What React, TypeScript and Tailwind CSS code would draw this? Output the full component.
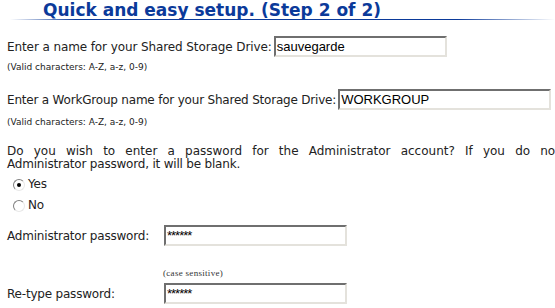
import React from "react";

const inputCls =
  "shrink-0 h-[21px] border-2 border-t-[#6f6f6f] border-l-[#6f6f6f] border-r-[#e4e2dc] border-b-[#e4e2dc] bg-white px-[1px] text-[13px] leading-[16px] tracking-normal text-black [font-family:'Liberation_Sans',Arial,sans-serif] flex items-center";

function Radio({ checked }: { checked?: boolean }) {
  return (
    <span className="relative inline-block w-[12px] h-[12px] rounded-full border border-t-[#808080] border-l-[#808080] border-r-[#e8e8e8] border-b-[#e8e8e8] bg-white">
      {checked && (
        <span className="absolute left-[3px] top-[3px] w-[4px] h-[4px] rounded-full bg-black" />
      )}
    </span>
  );
}

export default function App() {
  return (
    <div className="w-[555px] h-[308px] overflow-hidden bg-white text-[#222] [font-family:'DejaVu_Sans',Verdana,sans-serif]">
      <div className="relative h-[22px]">
        <div className="pl-[43px] pt-[1px] text-[17px] leading-[18px] font-bold text-[#0b3a9a] whitespace-nowrap">
          Quick and easy setup. (Step 2 of 2)
        </div>
        <div className="absolute left-[10px] right-0 top-[19px] h-[1px] bg-[linear-gradient(to_right,rgba(11,58,154,0)_0%,#0b3a9a_12%,#0b3a9a_82%,rgba(11,58,154,0)_100%)]" />
      </div>

      <div className="pl-[7px] pt-[14px] flex items-center whitespace-nowrap">
        <span className="shrink-0 text-[12px] leading-[14px] tracking-[-0.1px]">Enter a name for your Shared Storage Drive:</span>
        <div className={inputCls + " ml-[2px] w-[173px]"}>sauvegarde</div>
      </div>
      <div className="pl-[7px] pt-[5px] text-[9px] leading-[10px]">(Valid characters: A-Z, a-z, 0-9)</div>

      <div className="pl-[7px] pt-[17px] flex items-center whitespace-nowrap">
        <span className="shrink-0 text-[12px] leading-[14px] tracking-[-0.2px]">Enter a WorkGroup name for your Shared Storage Drive:</span>
        <div className={inputCls + " ml-[2px] w-[213px]"}>WORKGROUP</div>
      </div>
      <div className="pl-[7px] pt-[7px] text-[9px] leading-[10px]">(Valid characters: A-Z, a-z, 0-9)</div>

      <div className="pl-[7px] pt-[18px] w-[560px] text-[12px] leading-[13px]">
        <div className="whitespace-nowrap flex justify-between">
          {"Do you wish to enter a password for the Administrator account? If you do not"
            .split(" ")
            .map((w, i) => (
              <span key={i}>{w}</span>
            ))}
        </div>
        <div className="tracking-[-0.2px]">Administrator password, it will be blank.</div>
      </div>

      <div className="pl-[13px] pt-[7px] flex flex-col gap-[8px] text-[12px] leading-[13px] tracking-[-0.2px]">
        <label className="flex items-center gap-[3px]">
          <Radio checked />
          <span>Yes</span>
        </label>
        <label className="flex items-center gap-[3px]">
          <Radio />
          <span>No</span>
        </label>
      </div>

      <div className="pl-[7px] pt-[13px] flex items-center whitespace-nowrap">
        <span className="w-[157px] shrink-0 text-[12px] leading-[14px] tracking-[-0.2px]">Administrator password:</span>
        <div className={inputCls + " w-[183px] text-[10px] !tracking-[-1px]"}>******</div>
      </div>

      <div className="pl-[163px] pt-[22px] text-[9px] leading-[10px] text-[#333] tracking-[0.3px] [font-family:'Liberation_Serif',serif]">
        (case sensitive)
      </div>

      <div className="pl-[7px] pt-[5px] flex items-center whitespace-nowrap">
        <span className="w-[157px] shrink-0 text-[12px] leading-[14px] tracking-[-0.2px]">Re-type password:</span>
        <div className={inputCls + " w-[183px] text-[10px] !tracking-[-1px]"}>******</div>
      </div>
    </div>
  );
}
